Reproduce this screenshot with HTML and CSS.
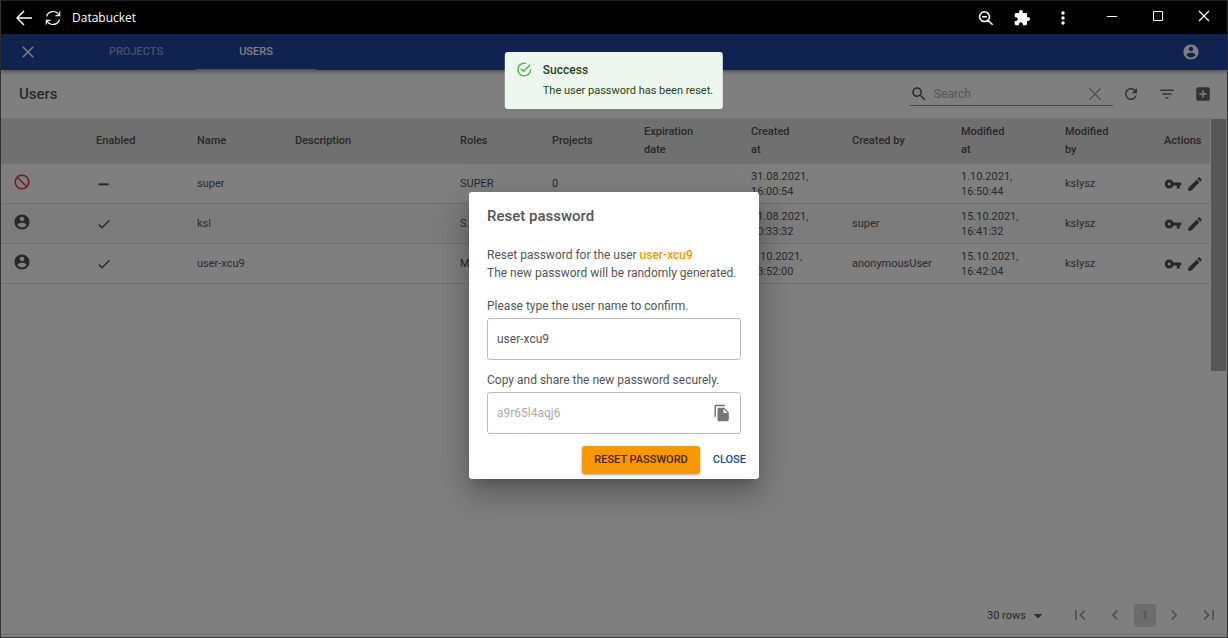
FILE: index.html
```html
<!DOCTYPE html>
<html lang="en">
<head>
<meta charset="utf-8">
<title>Databucket</title>
<link rel="stylesheet" href="styles.css">
</head>
<body>
<svg class="sprite" aria-hidden="true">
  <symbol id="account" viewBox="0 0 24 24"><path d="M12 2C6.480 2 2 6.480 2 12s4.480 10 10 10 10-4.480 10-10S17.520 2 12 2zm0 3c1.660 0 3 1.340 3 3s-1.340 3-3 3-3-1.340-3-3 1.340-3 3-3zm0 14.200c-2.500 0-4.710-1.280-6-3.220.030-1.990 4-3.080 6-3.080 1.990 0 5.970 1.090 6 3.080-1.290 1.940-3.500 3.220-6 3.220z"/></symbol>
  <symbol id="close" viewBox="0 0 24 24"><path d="M5 5l14 14M19 5L5 19" fill="none" stroke="currentColor" stroke-width="2"/></symbol>
  <symbol id="thin-x" viewBox="0 0 16 16"><path d="M3 3l10 10M13 3L3 13" fill="none" stroke="currentColor" stroke-width="1.200"/></symbol>
  <symbol id="key" viewBox="0 0 24 24"><path d="M12.650 10C11.830 7.670 9.610 6 7 6c-3.310 0-6 2.690-6 6s2.690 6 6 6c2.610 0 4.830-1.670 5.650-4H17v4h4v-4h2v-4H12.650zM7 14c-1.100 0-2-.900-2-2s.900-2 2-2 2 .900 2 2-.900 2-2 2z"/></symbol>
  <symbol id="edit" viewBox="0 0 24 24"><path d="M3 17.250V21h3.750L17.810 9.940l-3.750-3.750L3 17.250zM20.710 7.040c.390-.390.390-1.020 0-1.410l-2.340-2.340c-.390-.390-1.020-.390-1.410 0l-1.830 1.830 3.750 3.750 1.830-1.830z"/></symbol>
  <symbol id="check" viewBox="0 0 24 24"><path d="M9 16.170L4.830 12l-1.420 1.410L9 19 21 7l-1.410-1.410z"/></symbol>
  <symbol id="first" viewBox="0 0 24 24"><path d="M18.410 16.590L13.820 12l4.590-4.590L17 6l-6 6 6 6zM6 6h2v12H6z"/></symbol>
  <symbol id="last" viewBox="0 0 24 24"><path d="M5.590 7.410L10.180 12l-4.590 4.590L7 18l6-6-6-6zM16 6h2v12h-2z"/></symbol>
  <symbol id="prev" viewBox="0 0 24 24"><path d="M15.410 7.410L14 6l-6 6 6 6 1.410-1.410L10.830 12z"/></symbol>
  <symbol id="next" viewBox="0 0 24 24"><path d="M10 6L8.590 7.410 13.170 12l-4.580 4.590L10 18l6-6z"/></symbol>
</svg>
<div class="window">
  <header class="titlebar">
    <button class="tb-btn" aria-label="Back"><svg viewBox="0 0 16 16"><path d="M8 1L1 8l7 7M1 8h15" class="line"/></svg></button>
    <button class="tb-btn" aria-label="Reload"><svg viewBox="0 0 16 16"><path d="M1.500 6.500a6.700 6.700 0 0 1 12.600-1M14.500 9.500a6.700 6.700 0 0 1-12.600 1M14.700 1.500v4.200h-4.200M1.300 14.500v-4.200h4.200" class="line thin"/></svg></button>
    <span class="tb-title">Databucket</span>
    <div class="tb-tools">
      <button class="tb-btn" aria-label="Zoom"><svg viewBox="0 0 16 16"><path d="M6.500 1.800a4.900 4.900 0 1 0 .010 0zM4.200 6.700h4.700M10 10.200l4.700 4.600" class="line"/></svg></button>
      <button class="tb-btn" aria-label="Extensions"><svg viewBox="1 1 22 22"><path d="M20.500 11H19V7c0-1.100-.900-2-2-2h-4V3.500C13 2.120 11.880 1 10.500 1S8 2.120 8 3.500V5H4c-1.100 0-1.990.900-1.990 2v3.800H3.500c1.490 0 2.700 1.210 2.700 2.700s-1.210 2.700-2.700 2.700H2V20c0 1.100.900 2 2 2h3.800v-1.500c0-1.490 1.210-2.700 2.700-2.700 1.490 0 2.700 1.210 2.700 2.700V22H17c1.100 0 2-.900 2-2v-4h1.500c1.380 0 2.500-1.120 2.500-2.500S21.880 11 20.500 11z"/></svg></button>
      <button class="tb-btn" aria-label="Menu"><svg viewBox="0 0 16 16"><circle cx="8" cy="3" r="1.700"/><circle cx="8" cy="8" r="1.700"/><circle cx="8" cy="13" r="1.700"/></svg></button>
    </div>
    <div class="tb-window">
      <button class="tb-btn" aria-label="Minimize"><svg viewBox="0 0 16 16"><path d="M3 8h10v1H3z"/></svg></button>
      <button class="tb-btn" aria-label="Maximize"><svg viewBox="0 0 16 16"><path d="M3.500 3.500h9v9h-9z" class="line hair"/></svg></button>
      <button class="tb-btn" aria-label="Close window"><svg><use href="#thin-x"/></svg></button>
    </div>
  </header>

  <div class="app">
    <nav class="appbar">
      <button class="icon-btn" aria-label="Close"><svg><use href="#close"/></svg></button>
      <div class="tabs">
        <a class="tab" href="#projects">PROJECTS</a>
        <a class="tab active" href="#users">USERS</a>
      </div>
      <button class="icon-btn account" aria-label="Account"><svg><use href="#account"/></svg></button>
    </nav>

    <main class="page">
      <div class="toolbar">
        <h1>Users</h1>
        <div class="search">
          <svg viewBox="0 0 24 24"><path d="M15.500 14h-.790l-.280-.270C15.410 12.590 16 11.110 16 9.500 16 5.910 13.090 3 9.500 3S3 5.910 3 9.500 5.910 16 9.500 16c1.610 0 3.090-.590 4.230-1.570l.270.280v.790l5 4.990L20.490 19l-4.990-5zm-6 0C7.010 14 5 11.990 5 9.500S7.010 5 9.500 5 14 7.010 14 9.500 11.990 14 9.500 14z"/></svg>
          <input type="text" placeholder="Search" aria-label="Search">
          <button class="clear" aria-label="Clear search"><svg><use href="#thin-x"/></svg></button>
        </div>
        <div class="tools">
          <button class="icon-btn" aria-label="Refresh"><svg viewBox="0 0 24 24"><path d="M17.650 6.350C16.200 4.900 14.210 4 12 4c-4.420 0-7.990 3.580-7.990 8s3.570 8 7.990 8c3.730 0 6.840-2.550 7.730-6h-2.080c-.820 2.330-3.040 4-5.650 4-3.310 0-6-2.690-6-6s2.690-6 6-6c1.660 0 3.140.690 4.220 1.780L13 11h7V4l-2.350 2.350z"/></svg></button>
          <button class="icon-btn" aria-label="Filter"><svg viewBox="0 0 24 24"><path d="M10 18h4v-2h-4v2zM3 6v2h18V6H3zm3 7h12v-2H6v2z"/></svg></button>
          <button class="icon-btn" aria-label="Add user"><svg viewBox="0 0 24 24"><path d="M19 3H5c-1.110 0-2 .900-2 2v14c0 1.100.890 2 2 2h14c1.100 0 2-.900 2-2V5c0-1.100-.900-2-2-2zm-2 10h-4v4h-2v-4H7v-2h4V7h2v4h4v2z"/></svg></button>
        </div>
      </div>

      <div class="table-area">
        <table>
          <colgroup>
            <col class="c-icon"><col class="c-enabled"><col class="c-name"><col><col class="c-roles"><col class="c-projects"><col class="c-exp"><col class="c-cat"><col class="c-cby"><col class="c-mat"><col class="c-mby"><col class="c-act">
          </colgroup>
          <thead>
            <tr><th></th><th>Enabled</th><th>Name</th><th>Description</th><th>Roles</th><th>Projects</th><th>Expiration<br>date</th><th>Created<br>at</th><th>Created by</th><th>Modified<br>at</th><th>Modified<br>by</th><th>Actions</th></tr>
          </thead>
          <tbody>
            <tr>
              <td class="state"><svg class="blocked" viewBox="0 0 24 24"><path d="M12 3a9 9 0 1 0 .010 0zM5.700 5.700l12.600 12.600" fill="none" stroke="currentColor" stroke-width="2"/></svg></td>
              <td class="enabled"><svg viewBox="0 0 24 24"><path d="M4 11h15v3H4z"/></svg></td>
              <td>super</td><td></td><td>SUPER</td><td>0</td><td></td><td>31.08.2021,<br>16:00:54</td><td></td><td>1.10.2021,<br>16:50:44</td><td>kslysz</td>
              <td><div class="actions"><button aria-label="Reset password of super"><svg><use href="#key"/></svg></button><button aria-label="Edit super"><svg><use href="#edit"/></svg></button></div></td>
            </tr>
            <tr>
              <td class="state"><svg><use href="#account"/></svg></td>
              <td class="enabled"><svg><use href="#check"/></svg></td>
              <td>ksl</td><td></td><td>S...</td><td></td><td></td><td>31.08.2021,<br>20:33:32</td><td>super</td><td>15.10.2021,<br>16:41:32</td><td>kslysz</td>
              <td><div class="actions"><button aria-label="Reset password of ksl"><svg><use href="#key"/></svg></button><button aria-label="Edit ksl"><svg><use href="#edit"/></svg></button></div></td>
            </tr>
            <tr>
              <td class="state"><svg><use href="#account"/></svg></td>
              <td class="enabled"><svg><use href="#check"/></svg></td>
              <td>user-xcu9</td><td></td><td>M...</td><td></td><td></td><td>1.10.2021,<br>13:52:00</td><td>anonymousUser</td><td>15.10.2021,<br>16:42:04</td><td>kslysz</td>
              <td><div class="actions"><button aria-label="Reset password of user-xcu9"><svg><use href="#key"/></svg></button><button aria-label="Edit user-xcu9"><svg><use href="#edit"/></svg></button></div></td>
            </tr>
          </tbody>
        </table>
        <div class="scrollbar"><div class="thumb"></div></div>
      </div>

      <footer class="pager">
        <select aria-label="Rows per page"><option>30 rows</option></select>
        <button aria-label="First page"><svg><use href="#first"/></svg></button>
        <button aria-label="Previous page"><svg><use href="#prev"/></svg></button>
        <button class="current">1</button>
        <button aria-label="Next page"><svg><use href="#next"/></svg></button>
        <button aria-label="Last page"><svg><use href="#last"/></svg></button>
      </footer>
    </main>

    <div class="backdrop">
      <section class="dialog" role="dialog" aria-labelledby="dialog-title">
        <h2 id="dialog-title">Reset password</h2>
        <p>Reset password for the user <span class="user">user-xcu9</span><br>The new password will be randomly generated.</p>
        <label for="confirm">Please type the user name to confirm.</label>
        <div class="field"><input id="confirm" type="text" value="user-xcu9"></div>
        <label for="newpass">Copy and share the new password securely.</label>
        <div class="field">
          <input id="newpass" type="text" value="a9r65l4aqj6" disabled>
          <button aria-label="Copy password"><svg viewBox="0 0 24 24"><path d="M16 1H4c-1.100 0-2 .900-2 2v14h2V3h12V1zm-1 4l6 6v10c0 1.100-.900 2-2 2H7.990C6.890 23 6 22.100 6 21l.010-14c0-1.100.890-2 1.990-2h7zm-1 7h5.500L14 6.500V12z"/></svg></button>
        </div>
        <div class="dialog-actions">
          <button class="primary">RESET PASSWORD</button>
          <button class="text">CLOSE</button>
        </div>
      </section>
    </div>

    <div class="toast" role="alert">
      <svg viewBox="0 0 24 24"><path d="M20 12A8 8 0 1 1 12 4c.760 0 1.500.110 2.200.310l1.570-1.570A9.822 9.822 0 0 0 12 2 10 10 0 1 0 22 12M7.910 10.080L6.500 11.500 11 16 21 6l-1.410-1.420L11 13.170z"/></svg>
      <div>
        <strong>Success</strong>
        <p>The user password has been reset.</p>
      </div>
    </div>
  </div>
</div>
</body>
</html>
```
FILE: styles.css
```css
* { box-sizing: border-box; }
body { margin: 0; font-family: Roboto, sans-serif; font-size: 11px; color: #555; }
h1, h2, p { margin: 0; }
button { padding: 0; border: 0; background: none; color: inherit; font: inherit; }
input, select { border: 0; padding: 0; background: none; color: inherit; font: inherit; outline: 0; min-width: 0; }
svg { display: block; fill: currentColor; }
.sprite { display: none; }

.window { display: flex; flex-direction: column; min-height: 100vh; border: 1px solid #333; border-top-color: #222; }
.titlebar { display: flex; align-items: center; height: 33px; padding: 0 15px; gap: 13px; background: #000; color: #fff; }
.tb-btn svg { width: 16px; height: 16px; }
.line { fill: none; stroke: currentColor; stroke-width: 1.5; }
.line.thin { stroke-width: 1.2; }
.line.hair { stroke-width: 1; }
.tb-title { flex: 1; margin-left: -2px; font: 12px "Open Sans", sans-serif; }
.tb-tools { display: flex; gap: 20px; margin-right: 20px; }
.tb-tools .tb-btn:last-child { margin-left: 5px; }
.tb-window { display: flex; gap: 30px; padding-bottom: 4px; }

.app { position: relative; flex: 1; display: flex; flex-direction: column; background: #fff; }
.appbar { display: flex; align-items: center; height: 36px; padding: 0 27px 0 18px; background: #2046a0; color: #fff; box-shadow: 0 2px 4px rgba(0,0,0,.35); z-index: 1; }
.icon-btn svg { width: 18px; height: 18px; }
.tabs { display: flex; flex: 1; align-self: stretch; margin-left: 39px; }
.tab { width: 120px; line-height: 35px; text-align: center; color: #92a0c6; font-weight: 500; text-decoration: none; }
.tab.active { color: #fff; border-bottom: 1px solid #f79800; }

.page { flex: 1; display: flex; flex-direction: column; }
.toolbar { display: flex; align-items: center; height: 48px; padding: 0 15px 0 18px; }
h1 { flex: 1; font-size: 15px; font-weight: 500; }
.search { display: flex; align-items: center; width: 203px; height: 24px; border-bottom: 1px solid #888; }
.search svg { width: 18px; height: 18px; }
.search input { flex: 1; margin-left: 6px; font-size: 12px; }
.search input::placeholder { color: #aaa; opacity: 1; }
.search .clear { margin-right: 9px; color: #999; }
.tools { display: flex; gap: 18px; margin-left: 9px; color: #666; }

.table-area { flex: 1; display: flex; align-items: flex-start; }
table { flex: 1; table-layout: fixed; border-collapse: separate; border-spacing: 0; width: 100%; }
.c-icon { width: 89px; }
.c-enabled { width: 101px; }
.c-name { width: 98px; }
.c-roles, .c-projects { width: 92px; }
.c-exp { width: 107px; }
.c-cat { width: 101px; }
.c-cby { width: 109px; }
.c-mat { width: 104px; }
.c-mby { width: 99px; }
.c-act { width: 52px; }
th { height: 46px; padding: 0 0 0 6px; background: #e0e0e0; text-align: left; font-weight: 500; line-height: 18px; }
td { height: 40px; padding: 0 0 0 6px; line-height: 15px; border-bottom: 1px solid #e0e0e0; }
tbody tr:nth-child(even) { background: #f8f8f8; }
.state { padding: 0 0 4px 12px; }
.state svg { width: 18px; height: 18px; }
.blocked { color: #d83a2e; }
.enabled svg { width: 16px; height: 16px; }
.actions { display: flex; gap: 4px; }
.actions svg { width: 18px; height: 18px; }
th, .state svg:not(.blocked), .enabled, .actions { color: #505050; }
.scrollbar { width: 17px; padding: 1px; }
.thumb { height: 252px; border-radius: 1px; background: #aeaeae; }

.pager { display: flex; align-items: center; justify-content: flex-end; height: 43px; margin-bottom: 2px; padding: 4px 8px 0 0; border-bottom: 1px solid #e0e0e0; gap: 15px; color: #a0a0a0; }
.pager select { width: 58px; margin-right: 10px; appearance: none; color: #505050; background: linear-gradient(to bottom right, #666 50%, transparent 51%) 51px 5px / 4px 4px no-repeat, linear-gradient(to bottom left, #666 50%, transparent 51%) 47px 5px / 4px 4px no-repeat; }
.pager svg { width: 20px; height: 20px; }
.current { width: 22px; height: 23px; margin: 0 -7px 0 -6px; border-radius: 3px; background: #d8d8d8; font-weight: 500; }

.backdrop { position: absolute; inset: 0; z-index: 2; display: flex; align-items: center; justify-content: center; background: rgba(0,0,0,.5); }
.dialog { width: 290px; padding: 12px 18px 5px; border-radius: 3px; background: #fff; font-size: 12px; line-height: 18px; box-shadow: 0 8px 11px -5px rgba(0,0,0,.2), 0 18px 28px 2px rgba(0,0,0,.14), 0 7px 34px 6px rgba(0,0,0,.12); }
.dialog h2 { font-size: 15px; font-weight: 500; line-height: 24px; }
.dialog p { margin: 18px 0 15px; white-space: nowrap; }
.user { color: #f79800; font-weight: 500; }
.dialog label { display: block; margin-bottom: 3px; }
.field { display: flex; align-items: center; height: 42px; margin-bottom: 11px; padding: 0 9px; border: 1px solid #bbb; border-radius: 3px; }
.field input { flex: 1; }
.field input:disabled { color: #aaa; }
.field svg { width: 18px; height: 18px; color: #757575; }
.dialog-actions { display: flex; justify-content: flex-end; gap: 13px; margin: 12px -5px 0 0; font-size: 11px; font-weight: 500; }
.primary { height: 28px; padding: 0 12px; border-radius: 3px; background: #f79800; color: #3c2800; box-shadow: 0 1px 3px rgba(0,0,0,.35); }
.text { color: #2046a0; }

.toast { position: absolute; z-index: 3; top: 18px; left: 50%; transform: translateX(-50%); display: flex; gap: 10px; padding: 9px 10px 9px 11px; border-radius: 3px; background: #edf7ed; color: #1e4620; line-height: 18px; white-space: nowrap; }
.toast svg { width: 17px; height: 17px; color: #4caf50; }
.toast strong { font-size: 12px; font-weight: 500; }
.toast p { margin-top: 2px; }
```
